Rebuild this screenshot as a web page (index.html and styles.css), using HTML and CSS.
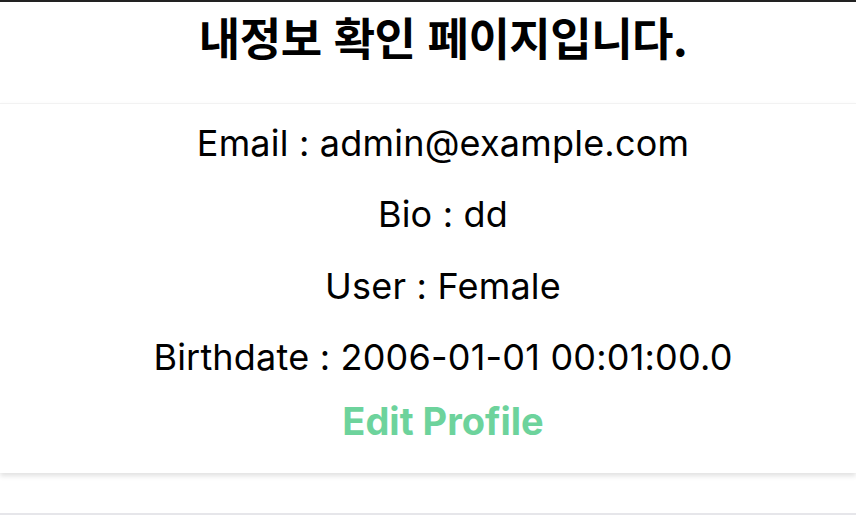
FILE: index.html
```html
<!DOCTYPE html>
<html lang="ko">
<head>
<meta charset="utf-8">
<title>내정보</title>
<link rel="stylesheet" href="styles.css">
</head>
<body>
<div class="topbar"></div>
<header class="header">
  <h1 class="title">내정보 확인 페이지입니다.</h1>
</header>
<main class="card">
  <p class="info">Email : admin@example.com</p>
  <p class="info">Bio : dd</p>
  <p class="info">User : Female</p>
  <p class="info">Birthdate : 2006-01-01 00:01:00.0</p>
  <a class="edit" href="#">Edit Profile</a>
</main>
<footer class="footer"></footer>
</body>
</html>
```

FILE: styles.css
```css
html, body {
  margin: 0;
  padding: 0;
  background: #ffffff;
}
body {
  font-family: Inter, "Noto Sans CJK KR", sans-serif;
  color: #000;
}
.topbar {
  height: 2px;
  background: #222222;
}
.header {
  height: 101px;
  display: flex;
  justify-content: center;
  padding-left: 30px;
}
.title {
  margin: 7px 0 0;
  font-family: "Noto Sans CJK KR", sans-serif;
  font-weight: 700;
  font-size: 45px;
  line-height: 56px;
  letter-spacing: -0.5px;
}
.card {
  border-top: 1px solid #f2f2f2;
  box-shadow: 0 3px 5px rgba(0,0,0,0.12);
  display: flex;
  flex-direction: column;
  align-items: center;
  padding: 17px 0 29px 30px;
}
.info {
  font-size: 36px;
  line-height: 44px;
  margin: 0 0 27.3px;
  letter-spacing: 0.2px;
}
.info:nth-of-type(4) {
  margin-bottom: 19px;
}
.edit {
  font-size: 38px;
  font-weight: 700;
  line-height: 46px;
  color: #6dd39c;
  text-decoration: none;
}
.footer {
  margin-top: 40px;
  border-top: 2px solid #e6e6ea;
  height: 20px;
}
```
